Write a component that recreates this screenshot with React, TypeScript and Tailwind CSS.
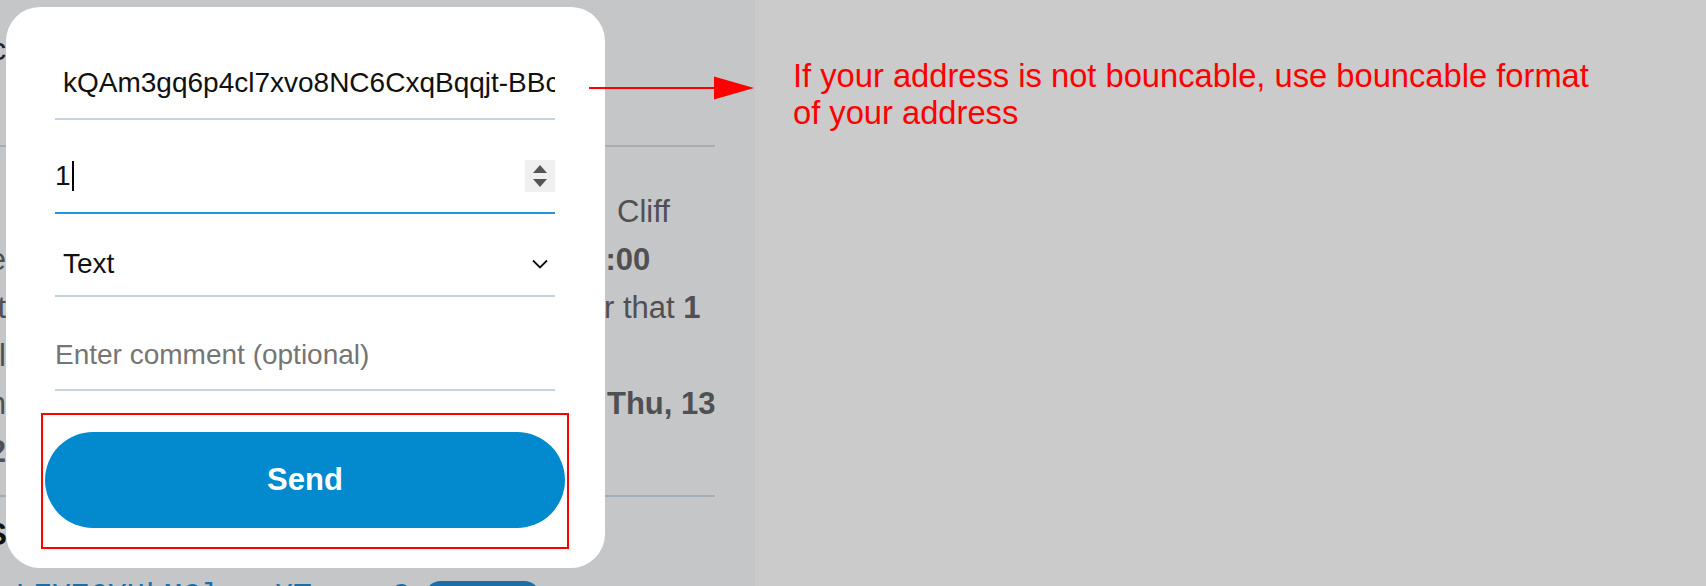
import React from 'react';

const font = { fontFamily: '"Liberation Sans", Arial, sans-serif' };

// Page behind the modal: only slivers of it peek out
const BackgroundPage: React.FC = () => (
  <div className="-ml-[20px] w-[760px] whitespace-nowrap text-[31px] text-[#505052]">
    <div className="mt-[27px] flex h-[47px] items-center">
      <span className="w-[26px] text-right text-[#222]">c</span>
    </div>
    <div className="mt-[71px] h-[2px] w-[735px] bg-[#a3aeb7]" />
    <div className="mt-[41px] flex h-[48px] items-center">
      <span className="w-[26px]" />
      <span className="ml-[611px]">Cliff</span>
    </div>
    <div className="flex h-[48px] items-center">
      <span className="w-[26px] text-right">e</span>
      <span className="ml-[565px] font-bold">12:00</span>
    </div>
    <div className="flex h-[48px] items-center">
      <span className="w-[26px] text-right">t</span>
      <span className="ml-[598px]">
        r that <b>1</b>
      </span>
    </div>
    <div className="flex h-[48px] items-center">
      <span className="w-[26px] text-right">l</span>
    </div>
    <div className="flex h-[48px] items-center">
      <span className="w-[26px] text-right">m</span>
      <span className="ml-[601px] font-bold">Thu, 13</span>
    </div>
    <div className="flex h-[48px] items-center">
      <span className="w-[26px] text-right font-bold">2</span>
    </div>
    <div className="mt-[19px] h-[2px] w-[735px] bg-[#a3aeb7]" />
    <div className="mt-[15px] flex h-[47px] items-center">
      <span className="w-[27px] text-right font-bold text-[#111]">S</span>
    </div>
    <div
      className="mt-[15px] flex h-[47px] items-center text-[#1b6fa6]"
      style={{ fontFamily: '"Liberation Mono", monospace' }}
    >
      <span className="ml-[35px]">LEYZ6YHkMCl</span>
      <span className="ml-[55px]">XT</span>
      <span className="ml-[80px]">2</span>
      <span className="ml-[14px] h-[34px] w-[117px] rounded-full bg-[#1b6fa6]" />
    </div>
  </div>
);

const SendModal: React.FC = () => (
  <div className="absolute left-[6px] top-[7px] h-[561px] w-[599px] rounded-[34px] bg-white pl-[49px] pr-[50px] pt-[41px] text-[28px]">
    {/* address */}
    <div className="flex h-[72px] items-center overflow-hidden whitespace-nowrap border-b-2 border-[#c6d3dc] pl-[8px] text-[#111]">
      kQAm3gq6p4cl7xvo8NC6CxqBqqjt-BBc
    </div>
    {/* amount */}
    <div className="mt-[20px] flex h-[74px] items-center justify-between border-b-2 border-[#1f95dd] text-[#111]">
      <div className="flex items-center">
        <span>1</span>
        <span className="ml-[1px] h-[30px] w-[2px] bg-black" />
      </div>
      <div className="flex h-[32px] w-[30px] flex-col items-center justify-center gap-[6px] bg-[#f0f0f0]">
        <svg width="14" height="8" viewBox="0 0 14 8">
          <polygon points="7,0 14,8 0,8" fill="#555" />
        </svg>
        <svg width="14" height="8" viewBox="0 0 14 8">
          <polygon points="0,0 14,0 7,8" fill="#555" />
        </svg>
      </div>
    </div>
    {/* format select */}
    <div className="mt-[19px] flex h-[64px] items-center justify-between border-b-2 border-[#c6d3dc] pl-[8px] pr-[7px] text-[#111]">
      <span>Text</span>
      <svg width="16" height="10" viewBox="0 0 16 10">
        <polyline points="1,1.5 8,8.5 15,1.5" fill="none" stroke="#111" strokeWidth="1.8" />
      </svg>
    </div>
    {/* comment */}
    <div className="mt-[24px] flex h-[70px] items-center border-b-2 border-[#c6d3dc] text-[#757575]">
      Enter comment (optional)
    </div>
    {/* highlighted send button */}
    <div className="-ml-[14px] mt-[22px] h-[136px] w-[528px] border-2 border-[#ff0000] pl-[2px] pt-[17px]">
      <button className="flex h-[96px] w-[520px] items-center justify-center rounded-full bg-[#0389cd] text-[31px] font-bold text-white">
        Send
      </button>
    </div>
  </div>
);

export default function App() {
  return (
    <div className="flex h-[586px] w-[1706px] overflow-hidden" style={font}>
      <div className="relative h-[586px] w-[755px] shrink-0 overflow-hidden bg-[#c5c6c8]">
        <BackgroundPage />
        <SendModal />
        <svg className="absolute left-[589px] top-[76px]" width="166" height="24" viewBox="0 0 166 24">
          <line x1="0" y1="12" x2="126" y2="12" stroke="#ff0000" strokeWidth="2" />
          <polygon points="125,0.5 165,12 125,23.5" fill="#ff0000" />
        </svg>
      </div>
      <div className="flex-1 bg-[#cbcbcb] pl-[38px] pt-[57px] text-[32.7px] leading-[37px] text-[#ff0000]">
        If your address is not bouncable, use bouncable format
        <br />
        of your address
      </div>
    </div>
  );
}
